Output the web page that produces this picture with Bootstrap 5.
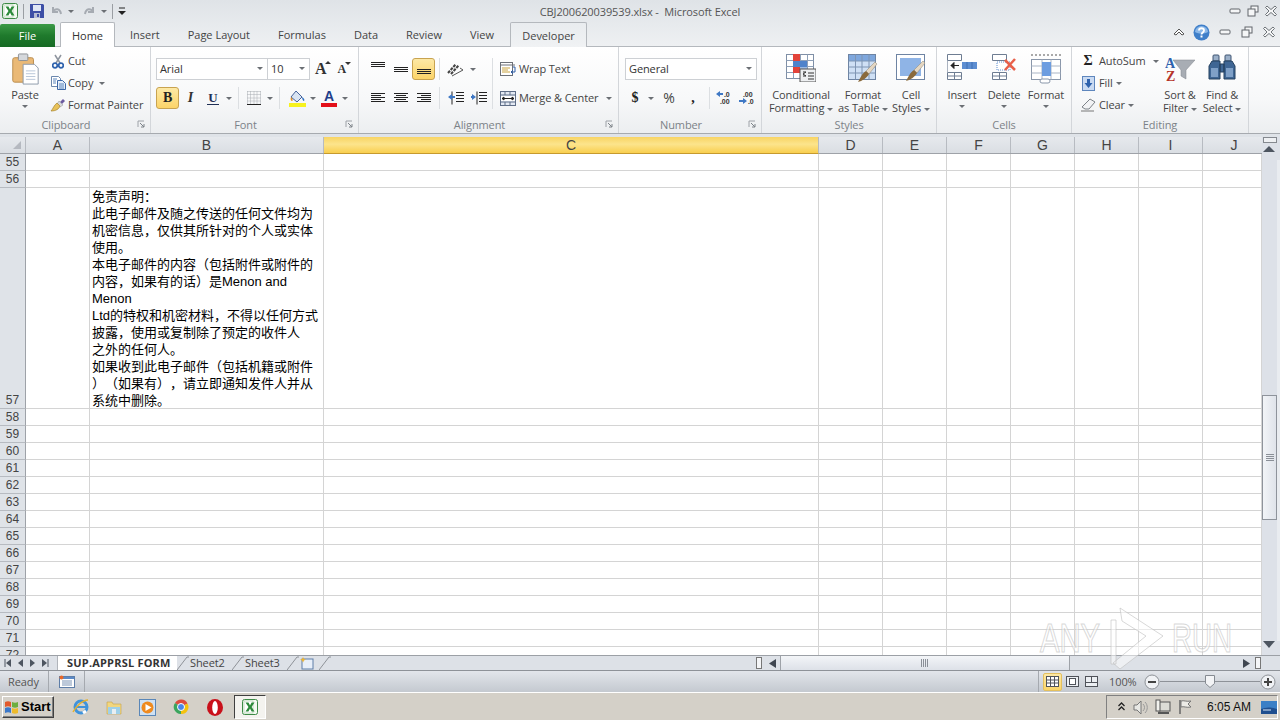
<!DOCTYPE html>
<html lang="en">
<head>
  <meta charset="UTF-8" />
  <title>CBJ200620039539.xlsx - Microsoft Excel</title>
  <link href="https://cdn.jsdelivr.net/npm/bootstrap@5.3.3/dist/css/bootstrap.min.css" rel="stylesheet"/>
  <style>
    body {
      width: 1280px;
      height: 720px;
      overflow: hidden;
      background: #d4d0c8;
      color: #444;
      font-family: "Open Sans", "Noto Sans", sans-serif;
      font-size: 11px;
      line-height: 13px;
      letter-spacing: -.1px;
    }

    svg { display: block; flex: none; }

    /* title + tabs */
    .xl-top { background: linear-gradient(#dfe3e7, #e8ebee 60%, #eef0f2); height: 47px; border-bottom: 1px solid #b4b8bd; }
    .xl-title { height: 22px; }
    .xl-side { flex: 1 1 0; }
    .xl-doc { color: #555; }
    .qat-sep { width: 1px; height: 15px; background: #9a9ea3; }
    .qat-left { padding-left: 2px; gap: 5px; }
    .win-btns { gap: 4px; padding-right: 2px; }
    .xl-tabs { height: 25px; letter-spacing: 0; }
    .tab-file { width: 55px; height: 23px; margin-top: 2px; background: linear-gradient(#3c9a47, #1f7a2c 50%, #166a24); color: #fff; border-radius: 2px 2px 0 0; margin-right: 5px; }
    .tab-home { width: 55px; height: 25px; background: #fff; border: 1px solid #b4b8bd; border-bottom: 0; border-radius: 2px 2px 0 0; color: #333; margin-right: 1px; position: relative; z-index: 2; }
    .tab-plain { padding: 0 14px; height: 25px; }
    .tab-dev { width: 77px; height: 25px; border: 1px solid #b4b8bd; border-bottom: 0; border-radius: 2px 2px 0 0; background: linear-gradient(#e9ecef, #f0f2f4); margin-left: 2px; }
    .tab-right { flex: 1; justify-content: flex-end; gap: 8px; padding-right: 4px; height: 20px; }

    /* ribbon */
    .xl-ribbon { height: 87px; background: linear-gradient(#fff, #f7f8f9 60%, #eceef0); border-bottom: 1px solid #a6aaaf; }
    .rb-grp { flex-direction: column; border-right: 1px solid #d3d6da; }
    .rb-clip { width: 151px; }
    .rb-font { width: 208px; }
    .rb-align { width: 260px; }
    .rb-num { width: 143px; }
    .rb-styles { width: 175px; }
    .rb-cells { width: 135px; }
    .rb-edit { width: 177px; }
    .rb-body { flex: 1; min-height: 0; }
    .rb-name { height: 17px; line-height: 17px; text-align: center; color: #7c8288; position: relative; }
    .rb-launch { padding-right: 18px; }
    .dlg-launch { position: absolute; right: 4px; top: 4px; }
    .pad-rows { padding-top: 11px; flex-direction: column; gap: 7px; }
    .pad-font { padding-left: 5px; }
    .pad-align { padding-left: 7px; }
    .pad-num { padding-left: 6px; }
    .pad-lg { padding: 7px 0 0 4px; }
    .pad-small { padding-top: 3px; }
    .rb-row { height: 22px; }
    .combo { height: 22px; border: 1px solid #cdd0d4; background: #fff; color: #333; padding: 0 0 2px 3px; justify-content: space-between; }
    .combo-font { width: 112px; }
    .combo-size { width: 43px; margin-left: -1px; }
    .combo-num { width: 132px; }
    .grow-set { margin-left: 5px; gap: 6px; }
    .tb { width: 23px; height: 22px; }
    .tb-22 { width: 22px; }
    .tb-20 { width: 20px; }
    .tb-24 { width: 24px; }
    .tb-26 { width: 26px; }
    .tb-on { background: linear-gradient(#fde9a6, #fcd468); border: 1px solid #c8a350; border-radius: 3px; }
    .cr-slot { width: 10px; height: 22px; }
    .cr-6 { width: 6px; }
    .cr-12 { width: 12px; }
    .cr { width: 0; height: 0; border-left: 3px solid transparent; border-right: 3px solid transparent; border-top: 3px solid #6b6f74; display: inline-block; vertical-align: middle; flex: none; }
    .vsep { width: 1px; height: 22px; background: #dcdfe2; margin: 0 4px; flex: none; }
    .vsep-wide { margin-left: 14px; }
    .vsep-near { margin-left: 2px; }
    .vsep-tall { height: 29px; margin-bottom: -7px; align-self: flex-start; }
    .txt-btn { padding-left: 3px; gap: 3px; color: #444; }
    .txt-btn span:not(.cr), .sm-row span:not(.cr) { padding-bottom: 2px; }
    .lg-btn { flex-direction: column; align-items: center; text-align: center; }
    .lg-icon { height: 34px; flex: none; }
    .lg-paste { height: 38px; padding-top: 3px; }
    .lg-caret { margin-top: 4px; line-height: 0; }
    .lg-42 { width: 42px; }
    .lg-50 { width: 50px; }
    .lg-54 { width: 54px; }
    .lg-70 { width: 70px; }
    .sm-col { flex-direction: column; }
    .sm-edit { width: 87px; padding-left: 8px; }
    .sm-edit .sm-row { gap: 3px; }
    .sm-row { height: 22px; gap: 2px; }
    .sm-ico { width: 16px; justify-content: center; }
    .sym-b { font: 700 14px/16px "Liberation Serif", serif; color: #222; }
    .sym-i { font: italic 700 14px/16px "Liberation Serif", serif; color: #333; }
    .sym-u { font: 700 13px/12px "Liberation Serif", serif; color: #1f2f55; border-bottom: 1px solid #1f2f55; padding: 0 1px; }
    .sym-big { font: 700 16px/16px "Liberation Serif", serif; color: #333; }
    .sym-small { font: 700 12px/14px "Liberation Serif", serif; color: #333; }
    .grow-ico { align-items: flex-start; }
    .grow-ico svg { margin-left: -1px; }
    .sym-color { font: 700 14px/13px "Liberation Sans", sans-serif; color: #1f3f8a; border-bottom: 4px solid #e3101a; width: 16px; text-align: center; }
    .sym-money { font: 700 14px/16px "Liberation Serif", serif; color: #222; }
    .sym-pct { font: 14px/16px "Open Sans", sans-serif; color: #444; }
    .sym-sum { font: 700 14px/16px "Liberation Serif", serif; color: #222; }

    /* sheet */
    .sheet-gap { height: 3px; background: #dfe3e8; }
    .sheet-wrap { height: 518px; }
    .sheet-main { width: 1262px; overflow: hidden; background: #fff; }
    .hdr-row { height: 17px; background: linear-gradient(#e6e9ed, #dadee3); border-bottom: 1px solid #9ea2a8; font: 14px/16px "Liberation Sans", sans-serif; color: #444; letter-spacing: 0; }
    .hdr-c { border-right: 1px solid #b7bbc1; text-align: center; flex: none; }
    .hdr-sel { background: linear-gradient(#f8d463, #fce48c 45%, #f9cf4f); border-bottom: 1px solid #c69a2e; margin-bottom: -1px; }
    .w-rh { width: 26px; }
    .w-a { width: 64px; }
    .w-b { width: 234px; }
    .w-c { width: 495px; }
    .w-n { width: 64px; }
    .w-j { width: 59px; border-right: 0; padding-left: 3px; }
    .grid-row { height: 17px; }
    .grid-tall { height: 221px; }
    .gc { flex: none; border-right: 1px solid #d4d4d4; border-bottom: 1px solid #d4d4d4; }
    .rh { background: #dfe3e8; border-right: 1px solid #9ea2a8; border-bottom: 1px solid #b7bbc1; font: 12px/16px "Liberation Sans", sans-serif; color: #444; text-align: center; display: flex; align-items: flex-end; justify-content: center; letter-spacing: 0; }
    .cell-text { font: 13px/17px "Liberation Sans", "Noto Sans CJK SC", sans-serif; color: #000; padding-left: 2px; white-space: nowrap; letter-spacing: 0; text-spacing-trim: space-all; }

    .vbar { width: 18px; background: #dde1e8; }
    .v-split { width: 14px; height: 6px; border: 1px solid #85898f; background: #eef0f3; margin: 0 0 3px 1px; }
    .v-arrow { height: 14px; width: 14px; }
    .v-track { flex: 1; border-right: 3px solid #e9ecf0; }
    .v-thumb { width: 15px; height: 125px; margin-top: 235px; background: linear-gradient(90deg, #f2f4f7, #dfe3ea); border: 1px solid #8e939b; }
    .v-down { height: 14px; width: 14px; }

    .sheet-bar { height: 16px; background: #dde1e7; border-top: 1px solid #9ca0a6; border-bottom: 1px solid #8e9298; color: #444; position: relative; }
    .sh-nav { width: 58px; padding-left: 4px; gap: 5px; border-right: 1px solid #b0b4ba; height: 100%; }
    .sh-on { width: 119px; height: 100%; background: #fff; color: #333; font-weight: 700; padding-left: 9px; line-height: 14px; letter-spacing: .2px; }
    .sh-tab { height: 100%; line-height: 14px; }
    .sh-wide { width: 43px; padding-left: 1px; }
    .sh-fill { flex: 1; }
    .sh-vs { width: 6px; height: 12px; border: 1px solid #777; background: #f4f5f7; margin-right: 3px; }
    .sh-vs-end { margin: 0 19px 0 1px; }
    .sh-arrow { width: 15px; justify-content: center; }
    .sh-thumb { width: 290px; height: 100%; background: linear-gradient(#f3f5f8, #dde1e8); border: 1px solid #9ea2a8; border-width: 0 1px; }
    .sh-track { width: 169px; }

    .status { height: 22px; background: linear-gradient(#e3e6eb, #d3d7dd 50%, #c4c9d0); color: #555; border-bottom: 1px solid #fff; }
    .st-sep { width: 1px; height: 21px; background: #a5a9af; }
    .st-ready { width: 48px; padding-left: 8px; }
    .st-macro { width: 35px; justify-content: center; }
    .st-fill { flex: 1; }
    .st-views { padding-left: 4px; gap: 1px; }
    .st-view { width: 18px; height: 18px; justify-content: center; }
    .st-active { background: linear-gradient(#fde9a6, #fbd569); border: 1px solid #e4c05e; border-radius: 2px; width: 19px; }
    .st-zoom { margin-left: 9px; width: 35px; }
    .st-slider { width: 100px; height: 1px; background: #8e9298; position: relative; }
    .st-thumb { position: absolute; left: 45px; top: -6px; }
    .st-end { padding-right: 4px; }

    .taskbar { height: 27px; background: #d4d0c8; padding: 2px 2px 1px; color: #000; letter-spacing: 0; }
    .start-btn { width: 52px; height: 22px; margin-top: 1px; border: 1px solid; border-color: #fff #404040 #404040 #fff; box-shadow: inset -1px -1px 0 #808080; font: 700 13px/20px "Liberation Sans", sans-serif; gap: 1px; padding-left: 1px; }
    .task-icons { margin-left: 10px; gap: 0; }
    .task-ic { width: 33.5px; height: 24px; justify-content: center; }
    .task-on { width: 32px; height: 24px; margin-left: 2px; justify-content: center; background: #f4f3ef; border: 1px solid; border-color: #404040 #fff #fff #404040; }
    .tray { width: 172px; height: 24px; border: 1px solid; border-color: #808080 #fff #fff #808080; padding-left: 6px; gap: 0; font: 12px/20px "Liberation Sans", sans-serif; color: #111; }
    .tray-ic { width: 24px; justify-content: center; }
    .tray-up { width: 18px; }
    .tray-time { width: 60px; text-align: center; margin-left: 4px; white-space: nowrap; }

    .wm { position: absolute; left: 1038px; top: 606px; pointer-events: none; }
    .wm text { font: 40px "Liberation Sans", sans-serif; fill: rgba(255,255,255,.5); stroke: rgba(190,190,190,.6); stroke-width: 1.200; }
  </style>
</head>
<body>
  <svg width="0" height="0" class="position-absolute">
    <symbol id="xl-logo" viewBox="0 0 16 16">
      <rect x=".5" y=".5" width="15" height="15" rx="2" fill="#f4faf2" stroke="#3d8a46"/>
      <rect x="2" y="2" width="9" height="12" fill="#fff" stroke="#9dc59f" stroke-width=".6"/>
      <path d="M3.5 3.5h3l1.5 3 1.6-3h2.9L9.6 8l2.9 4.5H9.6L8 9.4l-1.600 3.100h-2.900L6.500 8z" fill="#2c8a3a"/>
    </symbol>
    <symbol id="win-min" viewBox="0 0 12 12"><rect x="1" y="4" width="10" height="4" rx="1" fill="#f5f6f7" stroke="#60656b"/></symbol>
    <symbol id="win-rest" viewBox="0 0 12 12"><rect x="4" y="1" width="7" height="6" fill="#f5f6f7" stroke="#60656b"/><rect x="1" y="4" width="7" height="7" fill="#f5f6f7" stroke="#60656b"/></symbol>
    <symbol id="win-close" viewBox="0 0 12 12"><path d="M2 1l4 3.500L10 1l1.500 1.500L8 6l3.500 3.500L10 11 6 7.500 2 11 .5 9.500 4 6 .5 2.500z" fill="#f5f6f7" stroke="#60656b" stroke-width=".9"/></symbol>
    <symbol id="launch" viewBox="0 0 9 9"><path d="M1 7V1h6" fill="none" stroke="#9ea2a8"/><path d="M3 3l4 4M4 7h3V4" fill="none" stroke="#7c8288"/></symbol>
  </svg>

  <!-- title bar and ribbon tabs -->
  <div class="xl-top">
    <div class="xl-title d-flex align-items-center">
      <div class="xl-side d-flex align-items-center qat-left">
        <svg width="16" height="16"><use href="#xl-logo"/></svg>
        <div class="qat-sep"></div>
        <svg width="16" height="16" viewBox="0 0 16 16"><path d="M1 1h13l1 1v13H1z" fill="#3d4fa6"/><rect x="4" y="2" width="8" height="6" fill="#dfe6f5"/><rect x="5" y="10" width="6" height="5" fill="#b6bdd4"/><rect x="8" y="11" width="2" height="3" fill="#3d4fa6"/></svg>
        <svg width="13" height="13" viewBox="0 0 13 13"><path d="M3 2v5h5M3 7c2-4 7-4 8 2" fill="none" stroke="#a6abb2" stroke-width="2"/></svg>
        <span class="cr"></span>
        <svg class="ms-1" width="13" height="13" viewBox="0 0 13 13"><path d="M10 2v5H5M10 7C8 3 3 3 2 9" fill="none" stroke="#a6abb2" stroke-width="2"/></svg>
        <span class="cr"></span>
        <div class="qat-sep"></div>
        <svg width="8" height="8" viewBox="0 0 8 8"><path d="M1 1h6" stroke="#222" stroke-width="1"/><path d="M0 4h8L4 8z" fill="#222"/></svg>
      </div>
      <div class="xl-doc">CBJ200620039539.xlsx -&nbsp; Microsoft Excel</div>
      <div class="xl-side d-flex justify-content-end win-btns">
        <svg width="14" height="12"><use href="#win-min"/></svg>
        <svg width="14" height="12"><use href="#win-rest"/></svg>
        <svg width="14" height="12"><use href="#win-close"/></svg>
      </div>
    </div>
    <div class="xl-tabs d-flex">
      <div class="tab-file d-flex align-items-center justify-content-center">File</div>
      <div class="tab-home d-flex align-items-center justify-content-center">Home</div>
      <div class="tab-plain d-flex align-items-center">Insert</div>
      <div class="tab-plain d-flex align-items-center">Page Layout</div>
      <div class="tab-plain d-flex align-items-center">Formulas</div>
      <div class="tab-plain d-flex align-items-center">Data</div>
      <div class="tab-plain d-flex align-items-center">Review</div>
      <div class="tab-plain d-flex align-items-center">View</div>
      <div class="tab-dev d-flex align-items-center justify-content-center">Developer</div>
      <div class="tab-right d-flex align-items-center">
        <svg width="12" height="10" viewBox="0 0 12 10"><path d="M1 7l5-5 5 5-2 1-3-3-3 3z" fill="#fff" stroke="#555"/></svg>
        <svg width="17" height="17" viewBox="0 0 17 17"><circle cx="8.500" cy="8.500" r="8" fill="#3f7fc9"/><path d="M2 8a6.500 6 0 0 1 13 0c-4 2-9 2-13 0z" fill="#8ab7e8"/><path d="M6 6.500c0-3 5-3 5 0 0 2-2.500 2-2.500 4" fill="none" stroke="#fff" stroke-width="1.800"/><rect x="7.500" y="11.500" width="2" height="2" fill="#fff"/></svg>
        <svg width="14" height="12"><use href="#win-min"/></svg>
        <svg width="14" height="12"><use href="#win-rest"/></svg>
        <svg width="14" height="12"><use href="#win-close"/></svg>
      </div>
    </div>
  </div>

  <!-- ribbon -->
  <div class="xl-ribbon d-flex">
    <div class="rb-grp rb-clip d-flex">
      <div class="rb-body d-flex pad-small">
        <div class="lg-btn lg-50 d-flex">
          <div class="lg-icon lg-paste">
            <svg width="30" height="32" viewBox="0 0 30 34"><rect x="2" y="5" width="22" height="26" rx="2" fill="#eab976" stroke="#b98b4b"/><rect x="8" y="1" width="10" height="7" rx="1" fill="#d5d8dc" stroke="#8b8f94"/><path d="M13 12h12l4 4v17H13z" fill="#fff" stroke="#8b97a8"/><path d="M16 19h10M16 22h10M16 25h10M16 28h10" stroke="#b5c4d8"/></svg>
          </div>
          <div>Paste</div>
          <div class="lg-caret"><span class="cr"></span></div>
        </div>
        <div class="sm-col d-flex">
          <div class="sm-row d-flex align-items-center">
            <div class="sm-ico d-flex"><svg width="12" height="15" viewBox="0 0 12 15"><path d="M3 1l5 8M9 1L4 9" stroke="#8e959e" stroke-width="1.500"/><circle cx="3" cy="11.500" r="2.300" fill="none" stroke="#2e62ad" stroke-width="1.700"/><circle cx="9" cy="11.500" r="2.300" fill="none" stroke="#2e62ad" stroke-width="1.700"/></svg></div>
            <span>Cut</span>
          </div>
          <div class="sm-row d-flex align-items-center">
            <div class="sm-ico d-flex"><svg width="15" height="14" viewBox="0 0 15 14"><path d="M.5.5h7l2 2v8h-9z" fill="#fff" stroke="#6b87ad"/><path d="M6.500 4.500h5l3 3v6h-8z" fill="#e6eef9" stroke="#3c67a6"/><path d="M8 8h5M8 10h5M8 12h5M2 3h4M2 5h3M2 7h3" stroke="#5b85bd"/></svg></div>
            <span>Copy</span><span class="cr ms-1"></span>
          </div>
          <div class="sm-row d-flex align-items-center">
            <div class="sm-ico d-flex"><svg width="16" height="14" viewBox="0 0 16 14"><path d="M10 4l3-3 2 2-3 3z" fill="#6c5ba0"/><path d="M9 3l4 4-3 2-3-3z" fill="#d8d9dd" stroke="#8b8f94" stroke-width=".5"/><path d="M7 5l3 3c-1 3-4 5-9 5 2-2 3-6 6-8z" fill="#e8c25a" stroke="#a68530" stroke-width=".7"/></svg></div>
            <span>Format Painter</span>
          </div>
        </div>
      </div>
      <div class="rb-name rb-launch">Clipboard<svg class="dlg-launch" width="9" height="9"><use href="#launch"/></svg></div>
    </div>

    <div class="rb-grp rb-font d-flex">
      <div class="rb-body d-flex pad-rows pad-font">
        <div class="rb-row d-flex align-items-center">
          <div class="combo combo-font d-flex align-items-center">Arial<span class="cr me-1"></span></div>
          <div class="combo combo-size d-flex align-items-center">10<span class="cr me-1"></span></div>
          <div class="grow-set d-flex align-items-center">
            <div class="grow-ico d-flex"><span class="sym-big">A</span><svg width="6" height="4" viewBox="0 0 6 4"><path d="M0 3l3-3 3 3z" fill="#333"/></svg></div>
            <div class="grow-ico d-flex"><span class="sym-small">A</span><svg width="6" height="4" viewBox="0 0 6 4"><path d="M0 0h6L3 3z" fill="#333"/></svg></div>
          </div>
        </div>
        <div class="rb-row d-flex align-items-center">
          <div class="tb tb-on d-flex align-items-center justify-content-center"><span class="sym-b">B</span></div>
          <div class="tb d-flex align-items-center justify-content-center"><span class="sym-i">I</span></div>
          <div class="tb tb-22 d-flex align-items-center justify-content-center"><span class="sym-u">U</span></div>
          <div class="cr-slot d-flex align-items-center justify-content-center"><span class="cr"></span></div>
          <div class="vsep"></div>
          <div class="tb tb-22 d-flex align-items-center justify-content-center"><svg width="14" height="14" viewBox="0 0 14 14"><path d="M.5.5h13M.5 3.500h13M.5 7h13M.5 10h13M.5.5v13M3.500.5v13M7 .5v13M10 .5v13M13.500.5v13" stroke="#a9adb3" stroke-dasharray="1 1" fill="none"/><path d="M0 13.500h14" stroke="#222"/></svg></div>
          <div class="cr-slot d-flex align-items-center justify-content-center"><span class="cr"></span></div>
          <div class="vsep"></div>
          <div class="tb tb-26 d-flex align-items-center justify-content-center"><svg width="17" height="17" viewBox="0 0 17 17"><rect y="13" width="17" height="4" fill="#f7f21e"/><path d="M7 1l6 6-5 5-6-5z" fill="#d9e4f2" stroke="#47639a"/><path d="M13 7c2 1 3 3 2 4-1 0-2-2-2-4z" fill="#2d6fc0"/><path d="M2 7c-1 2 0 4 1 4s1-2-1-4z" fill="#e48f24"/></svg></div>
          <div class="cr-slot cr-6 d-flex align-items-center justify-content-center"><span class="cr"></span></div>
          <div class="tb tb-26 d-flex align-items-center justify-content-center"><span class="sym-color">A</span></div>
          <div class="cr-slot cr-6 d-flex align-items-center justify-content-center"><span class="cr"></span></div>
        </div>
      </div>
      <div class="rb-name rb-launch">Font<svg class="dlg-launch" width="9" height="9"><use href="#launch"/></svg></div>
    </div>

    <div class="rb-grp rb-align d-flex">
      <div class="rb-body d-flex pad-rows pad-align">
        <div class="rb-row d-flex align-items-center">
          <div class="tb d-flex align-items-start justify-content-center pt-1"><svg width="14" height="7" viewBox="0 0 14 7"><path d="M0 .5h14M0 2.500h14M0 4.500h14" stroke="#222"/></svg></div>
          <div class="tb d-flex align-items-center justify-content-center"><svg width="14" height="7" viewBox="0 0 14 7"><path d="M0 1.500h14M0 3.500h14M0 5.500h14" stroke="#222"/></svg></div>
          <div class="tb tb-on d-flex align-items-end justify-content-center pb-1"><svg width="14" height="7" viewBox="0 0 14 7"><path d="M0 1.500h14M0 3.500h14M0 5.500h14" stroke="#222"/></svg></div>
          <div class="vsep"></div>
          <div class="tb tb-24 d-flex align-items-center justify-content-center"><svg width="20" height="18" viewBox="0 0 20 18"><path d="M2 13l8-9M5 14l8-9" stroke="#444" stroke-width="2" stroke-dasharray="3 1"/><path d="M6 16l11-6-3-2" fill="none" stroke="#555"/></svg></div>
          <div class="cr-slot d-flex align-items-center justify-content-center"><span class="cr"></span></div>
          <div class="vsep vsep-wide vsep-tall"></div>
          <div class="txt-btn d-flex align-items-center">
            <svg width="16" height="15" viewBox="0 0 16 15"><rect x=".5" y=".5" width="12" height="13" fill="#fff" stroke="#6d7178"/><path d="M0 3h15" stroke="#6d7178"/><path d="M2 6h8M2 8h6M2 10h8" stroke="#c9a440" stroke-width="1.200"/><path d="M13 5h2v5h-3M13 8l-2 2 2 2" fill="none" stroke="#2f5fa8"/></svg>
            <span>Wrap Text</span>
          </div>
        </div>
        <div class="rb-row d-flex align-items-center">
          <div class="tb d-flex align-items-center justify-content-center"><svg width="14" height="12" viewBox="0 0 14 12"><path d="M0 1.500h14M0 3.500h10M0 5.500h14M0 7.500h10M0 9.500h14" stroke="#222"/></svg></div>
          <div class="tb d-flex align-items-center justify-content-center"><svg width="14" height="12" viewBox="0 0 14 12"><path d="M0 1.500h14M2 3.500h10M0 5.500h14M2 7.500h10M0 9.500h14" stroke="#222"/></svg></div>
          <div class="tb d-flex align-items-center justify-content-center"><svg width="14" height="12" viewBox="0 0 14 12"><path d="M0 1.500h14M4 3.500h10M0 5.500h14M4 7.500h10M0 9.500h14" stroke="#222"/></svg></div>
          <div class="vsep"></div>
          <div class="tb d-flex align-items-center justify-content-center"><svg width="16" height="14" viewBox="0 0 16 14"><path d="M8 1.500h8M8 4.500h8M8 7.500h8M8 10.500h8M4 .5v13" stroke="#222"/><path d="M0 6l4-3v2h3v2H4v2z" fill="#3f78c4"/></svg></div>
          <div class="tb d-flex align-items-center justify-content-center"><svg width="16" height="14" viewBox="0 0 16 14"><path d="M8 1.500h8M8 4.500h8M8 7.500h8M8 10.500h8M6 .5v13" stroke="#222"/><path d="M5 6L1 3v2h-1v2h1v2z" fill="#3f78c4"/></svg></div>
          <div class="vsep vsep-near"></div>
          <div class="txt-btn d-flex align-items-center">
            <svg width="16" height="15" viewBox="0 0 16 15"><rect x=".5" y=".5" width="15" height="14" fill="#e3e9f3" stroke="#5f6e87"/><path d="M.5 4h15M.5 11h15M5 .5v3.500M10 .5v3.500M5 11v3.500M10 11v3.500" stroke="#5f6e87"/><rect x="1" y="5" width="14" height="5" fill="#fff"/><path d="M2 7.500h12M2 7.500l2-1.500v3zM14 7.500l-2-1.500v3z" stroke="#222" fill="#222"/></svg>
            <span>Merge &amp; Center</span><span class="cr ms-1"></span>
          </div>
        </div>
      </div>
      <div class="rb-name rb-launch">Alignment<svg class="dlg-launch" width="9" height="9"><use href="#launch"/></svg></div>
    </div>

    <div class="rb-grp rb-num d-flex">
      <div class="rb-body d-flex pad-rows pad-num">
        <div class="rb-row d-flex align-items-center">
          <div class="combo combo-num d-flex align-items-center">General<span class="cr me-1"></span></div>
        </div>
        <div class="rb-row d-flex align-items-center">
          <div class="tb tb-20 d-flex align-items-center justify-content-center sym-money">$</div>
          <div class="cr-slot cr-12 d-flex align-items-center justify-content-center"><span class="cr"></span></div>
          <div class="tb tb-24 d-flex align-items-center justify-content-center sym-pct">%</div>
          <div class="tb tb-24 d-flex align-items-center justify-content-center sym-money">,</div>
          <div class="vsep"></div>
          <div class="tb tb-22 d-flex align-items-center justify-content-center"><svg width="18" height="16" viewBox="0 0 18 16"><text x="8" y="7" font-family="Liberation Sans" font-weight="700" font-size="7" fill="#333">.0</text><text x="4" y="14" font-family="Liberation Sans" font-weight="700" font-size="7" fill="#333">.00</text><path d="M0 4l4-3v2h3v2H4v2z" fill="#3f78c4"/></svg></div>
          <div class="tb tb-22 d-flex align-items-center justify-content-center"><svg width="18" height="16" viewBox="0 0 18 16"><text x="5" y="7" font-family="Liberation Sans" font-weight="700" font-size="7" fill="#333">.00</text><text x="10" y="14" font-family="Liberation Sans" font-weight="700" font-size="7" fill="#333">.0</text><path d="M9 11l-4-3v2H1v2h4v2z" fill="#3f78c4"/></svg></div>
        </div>
      </div>
      <div class="rb-name rb-launch">Number<svg class="dlg-launch" width="9" height="9"><use href="#launch"/></svg></div>
    </div>

    <div class="rb-grp rb-styles d-flex">
      <div class="rb-body d-flex pad-lg">
        <div class="lg-btn lg-70 d-flex">
          <div class="lg-icon">
            <svg width="30" height="28" viewBox="0 0 30 28"><rect x=".5" y=".5" width="27" height="24" fill="#fff" stroke="#7f8fa6"/><path d="M.5 6.500h27M.5 12.500h27M.5 18.500h27M7.500 .5v24M14.500 .5v24M21.500 .5v24" stroke="#8ea0b8"/><rect x="7" y="0" width="7" height="7" fill="#e3433a"/><rect x="7" y="7" width="14" height="6" fill="#4f83cb"/><rect x="7" y="13" width="7" height="6" fill="#e3433a"/><rect x="14" y="13" width="7" height="6" fill="#9cbbe3"/><rect x="14" y="15" width="16" height="13" fill="#eef0f2" stroke="#555"/><path d="M17 18h3l-3 2 3 2h-3M22 19h6M22 22h6M22 25h6" fill="none" stroke="#333"/></svg>
          </div>
          <div>Conditional</div>
          <div>Formatting <span class="cr"></span></div>
        </div>
        <div class="lg-btn lg-54 d-flex">
          <div class="lg-icon">
            <svg width="30" height="29" viewBox="0 0 30 29"><rect x=".5" y=".5" width="27" height="25" fill="#cfe0f5" stroke="#6e84a3"/><rect x="1" y="1" width="26" height="6" fill="#7ea7dd"/><path d="M.5 7h27M.5 13h27M.5 19h27M7.500 .5v25M14 .5v25M21 .5v25" stroke="#7f95b3"/><path d="M29 10l-2-2-9 9 3 3z" fill="#e5d7c2" stroke="#8d8472" stroke-width=".5"/><path d="M18 17l3 3c-2 4-7 7-11 8 2-3 4-9 8-11z" fill="#8a6a3c"/></svg>
          </div>
          <div>Format</div>
          <div>as Table <span class="cr"></span></div>
        </div>
        <div class="lg-btn lg-42 d-flex">
          <div class="lg-icon">
            <svg width="30" height="29" viewBox="0 0 30 29"><rect x=".5" y=".5" width="28" height="25" fill="#fff" stroke="#6e84a3"/><rect x="4" y="4" width="21" height="18" fill="#8fb4e6"/><path d="M29 9l-2-2-9 9 3 3z" fill="#e5d7c2" stroke="#8d8472" stroke-width=".5"/><path d="M18 16l3 3c-2 4-7 7-11 8 2-3 4-9 8-11z" fill="#8a6a3c"/></svg>
          </div>
          <div>Cell</div>
          <div>Styles <span class="cr"></span></div>
        </div>
      </div>
      <div class="rb-name">Styles</div>
    </div>

    <div class="rb-grp rb-cells d-flex">
      <div class="rb-body d-flex pad-lg">
        <div class="lg-btn lg-42 d-flex">
          <div class="lg-icon">
            <svg width="30" height="27" viewBox="0 0 30 27"><path d="M.5.5h14v6H.5zM.5 18.500h14v7H.5zM7.500 18.500v7M.5 22h14" fill="#fff" stroke="#6e7d92"/><rect x="15" y="8" width="15" height="7" fill="#5d8ed1"/><path d="M20 8v7M25 8v7" stroke="#3f6fb3"/><path d="M4 11.500h8M4 11.500l3-3v6z" stroke="#222" fill="#222"/><path d="M.5 7v11" stroke="#aab3c0"/></svg>
          </div>
          <div>Insert</div>
          <div class="lg-caret"><span class="cr"></span></div>
        </div>
        <div class="lg-btn lg-42 d-flex">
          <div class="lg-icon">
            <svg width="25" height="27" viewBox="0 0 25 27"><path d="M.5.5h14v6H.5zM.5 18.500h14v7H.5zM7.500 18.500v7M.5 22h14" fill="#fff" stroke="#6e7d92"/><path d="M5 8h13v8H5z" fill="#fff" stroke="#5d8ed1" stroke-dasharray="1 1"/><path d="M13 6l10 10M23 5L13 16" stroke="#e8604a" stroke-width="2.500"/></svg>
          </div>
          <div>Delete</div>
          <div class="lg-caret"><span class="cr"></span></div>
        </div>
        <div class="lg-btn lg-42 d-flex">
          <div class="lg-icon">
            <svg width="32" height="30" viewBox="0 0 32 30"><path d="M1 1h30" stroke="#555" stroke-dasharray="2 2"/><rect x="1.500" y="5.500" width="29" height="20" fill="#fff" stroke="#8a97aa"/><path d="M12 5.500v20M21 5.500v20M1.500 12h29M1.500 19h29" stroke="#aab5c5"/><rect x="12" y="8" width="9" height="14" fill="#6d9de0"/><rect x="10" y="25" width="10" height="4" rx="2" fill="#fff" stroke="#8a97aa"/></svg>
          </div>
          <div>Format</div>
          <div class="lg-caret"><span class="cr"></span></div>
        </div>
      </div>
      <div class="rb-name">Cells</div>
    </div>

    <div class="rb-grp rb-edit d-flex">
      <div class="rb-body d-flex pad-small">
        <div class="sm-col sm-edit d-flex">
          <div class="sm-row d-flex align-items-center">
            <div class="sm-ico d-flex sym-sum">Σ</div>
            <span>AutoSum</span><span class="cr ms-1"></span>
          </div>
          <div class="sm-row d-flex align-items-center">
            <div class="sm-ico d-flex"><svg width="13" height="15" viewBox="0 0 13 15"><rect x=".5" y=".5" width="12" height="14" fill="#c9daf2" stroke="#5e86bd"/><path d="M5 3h3v4h2.500L6.500 12 2.500 7H5z" fill="#2e62ad"/></svg></div>
            <span>Fill</span><span class="cr"></span>
          </div>
          <div class="sm-row d-flex align-items-center">
            <div class="sm-ico d-flex"><svg width="15" height="14" viewBox="0 0 15 14"><path d="M9 1l5 3-6 7H4L1 9z" fill="#f2f3f5" stroke="#7c8288"/><path d="M0 13h13" stroke="#777"/></svg></div>
            <span>Clear</span><span class="cr"></span>
          </div>
        </div>
        <div class="lg-btn lg-42 d-flex mt-1">
          <div class="lg-icon">
            <svg width="30" height="31" viewBox="0 0 30 31"><path d="M8 6h22l-9 10v9l-5-3v-6z" fill="#a8adb4" stroke="#80858c" stroke-width=".5"/><text x="0" y="14" font-family="Liberation Serif" font-weight="700" font-size="14" fill="#2f62ad">A</text><text x="1" y="27" font-family="Liberation Serif" font-weight="700" font-size="14" fill="#b5342a">Z</text></svg>
          </div>
          <div>Sort &amp;</div>
          <div>Filter <span class="cr"></span></div>
        </div>
        <div class="lg-btn lg-42 d-flex mt-1">
          <div class="lg-icon">
            <svg width="28" height="27" viewBox="0 0 28 27"><rect x="5" y="1" width="6" height="6" rx="1" fill="#9bb0c9" stroke="#3f5573"/><rect x="17" y="1" width="6" height="6" rx="1" fill="#9bb0c9" stroke="#3f5573"/><path d="M1 25V12l3-5h8v18zM16 25V7h8l3 5v13zM12 10h4v8h-4z" fill="#3f6694" stroke="#24405f"/><path d="M3 14h7v9H3zM18 14h7v9h-7z" fill="#7fa0c7"/></svg>
          </div>
          <div>Find &amp;</div>
          <div>Select <span class="cr"></span></div>
        </div>
      </div>
      <div class="rb-name">Editing</div>
    </div>
  </div>

  <!-- worksheet -->
  <div class="sheet-gap"></div>
  <div class="sheet-wrap d-flex">
    <div class="sheet-main">
      <div class="hdr-row d-flex">
        <div class="hdr-c w-rh d-flex align-items-end justify-content-end p-1"><svg width="8" height="8" viewBox="0 0 8 8"><path d="M8 0v8H0z" fill="#b5b9c0"/></svg></div>
        <div class="hdr-c w-a">A</div>
        <div class="hdr-c w-b">B</div>
        <div class="hdr-c w-c hdr-sel">C</div>
        <div class="hdr-c w-n">D</div>
        <div class="hdr-c w-n">E</div>
        <div class="hdr-c w-n">F</div>
        <div class="hdr-c w-n">G</div>
        <div class="hdr-c w-n">H</div>
        <div class="hdr-c w-n">I</div>
        <div class="hdr-c w-j">J</div>
      </div>
      <div id="grid"></div>
    </div>
    <div class="vbar d-flex flex-column">
      <div class="v-split"></div>
      <div class="v-arrow d-flex justify-content-center"><svg width="12" height="7" viewBox="0 0 12 7"><path d="M6 0l6 6H0z" fill="#4d5560"/></svg></div>
      <div class="v-track">
        <div class="v-thumb d-flex align-items-center justify-content-center"><svg width="8" height="8" viewBox="0 0 8 8"><path d="M0 .5h8M0 2.500h8M0 4.500h8M0 6.500h8" stroke="#8a8f97"/></svg></div>
      </div>
      <div class="v-down d-flex justify-content-center"><svg width="12" height="7" viewBox="0 0 12 7"><path d="M6 7L0 0h12z" fill="#4d5560"/></svg></div>
    </div>
  </div>

  <!-- sheet tabs + horizontal scrollbar -->
  <div class="sheet-bar d-flex align-items-center">
    <div class="sh-nav d-flex align-items-center">
      <svg width="8" height="8" viewBox="0 0 8 8"><path d="M1 0v8" stroke="#4d5560"/><path d="M7 0v8L2 4z" fill="#4d5560"/></svg>
      <svg width="7" height="8" viewBox="0 0 7 8"><path d="M6 0v8L1 4z" fill="#4d5560"/></svg>
      <svg width="7" height="8" viewBox="0 0 7 8"><path d="M1 0v8l5-4z" fill="#4d5560"/></svg>
      <svg width="8" height="8" viewBox="0 0 8 8"><path d="M7 0v8" stroke="#4d5560"/><path d="M1 0v8l5-4z" fill="#4d5560"/></svg>
    </div>
    <div class="sh-on">SUP.APPRSL FORM</div>
    <svg width="12" height="14" viewBox="0 0 12 14"><path d="M0 14L10 1h2" fill="none" stroke="#8e9298"/></svg>
    <div class="sh-tab sh-wide">Sheet2</div>
    <svg width="12" height="14" viewBox="0 0 12 14"><path d="M0 14L10 1h2" fill="none" stroke="#8e9298"/></svg>
    <div class="sh-tab sh-wide">Sheet3</div>
    <svg width="12" height="14" viewBox="0 0 12 14"><path d="M0 14L10 1h2" fill="none" stroke="#8e9298"/></svg>
    <svg width="16" height="14" viewBox="0 0 16 14"><rect x="3" y="3" width="11" height="10" fill="#e8eff9" stroke="#5e7ea8"/><path d="M4 1l1 2 2 .5-2 1-1 2-1-2-2-1 2-.5z" fill="#e8b339"/></svg>
    <svg class="ms-1" width="12" height="14" viewBox="0 0 12 14"><path d="M0 14L10 1h2" fill="none" stroke="#8e9298"/></svg>
    <div class="sh-fill"></div>
    <div class="sh-vs"></div>
    <div class="sh-arrow d-flex"><svg width="7" height="9" viewBox="0 0 7 9"><path d="M7 0v9L0 4.500z" fill="#3f4650"/></svg></div>
    <div class="sh-thumb d-flex align-items-center justify-content-center"><svg width="8" height="8" viewBox="0 0 8 8"><path d="M.5 0v8M2.500 0v8M4.500 0v8M6.500 0v8" stroke="#8a8f97"/></svg></div>
    <div class="sh-track"></div>
    <div class="sh-arrow d-flex"><svg width="7" height="9" viewBox="0 0 7 9"><path d="M0 0v9l7-4.500z" fill="#3f4650"/></svg></div>
    <div class="sh-vs sh-vs-end"></div>
  </div>

  <!-- status bar -->
  <div class="status d-flex align-items-center">
    <div class="st-ready">Ready</div>
    <div class="st-sep"></div>
    <div class="st-macro d-flex"><svg width="16" height="13" viewBox="0 0 16 13"><rect x=".5" y="1.500" width="15" height="11" fill="#fff" stroke="#5e7ea8"/><rect x="1" y="2" width="14" height="2" fill="#5b8ac8"/><path d="M3 6h10M3 8h10M3 10h10" stroke="#7a93b5"/><circle cx="2.500" cy="2.500" r="2" fill="#e5682b"/></svg></div>
    <div class="st-sep"></div>
    <div class="st-fill"></div>
    <div class="st-sep"></div>
    <div class="st-views d-flex align-items-center">
      <div class="st-view st-active d-flex align-items-center"><svg width="13" height="11" viewBox="0 0 13 11"><rect x=".5" y=".5" width="12" height="10" fill="#fff" stroke="#50535a"/><path d="M.5 4h12M.5 7h12M4.500 .5v10M8.500 .5v10" stroke="#50535a"/></svg></div>
      <div class="st-view d-flex align-items-center"><svg width="13" height="11" viewBox="0 0 13 11"><rect x=".5" y=".5" width="12" height="10" fill="#eceff3" stroke="#50535a"/><rect x="3.500" y="2.500" width="6" height="6" fill="#fff" stroke="#50535a"/></svg></div>
      <div class="st-view d-flex align-items-center"><svg width="13" height="11" viewBox="0 0 13 11"><rect x=".5" y=".5" width="12" height="10" fill="#eceff3" stroke="#50535a"/><path d="M6.500 .5v6M.5 6.500h12" stroke="#50535a"/></svg></div>
    </div>
    <div class="st-zoom">100%</div>
    <svg width="16" height="16" viewBox="0 0 16 16"><circle cx="8" cy="8" r="7" fill="#f0f2f5" stroke="#8e9298"/><path d="M4 8h8" stroke="#444" stroke-width="2"/></svg>
    <div class="st-slider"><svg class="st-thumb" width="10" height="13" viewBox="0 0 10 13"><path d="M.5.5h9v8L5 12.500.5 8.500z" fill="#f3f4f6" stroke="#858a91"/></svg></div>
    <div class="st-end"><svg width="16" height="16" viewBox="0 0 16 16"><circle cx="8" cy="8" r="7" fill="#f0f2f5" stroke="#8e9298"/><path d="M4 8h8M8 4v8" stroke="#444" stroke-width="2"/></svg></div>
  </div>

  <!-- windows taskbar -->
  <div class="taskbar d-flex align-items-start">
    <div class="start-btn d-flex align-items-center">
      <svg width="16" height="15" viewBox="0 0 16 15"><path d="M1 2c2-1 4-1 6 0v5c-2-1-4-1-6 0z" fill="#e2592b"/><path d="M8 2c2 1 4 1 6 0v5c-2 1-4 1-6 0z" fill="#6cae3f"/><path d="M1 8c2-1 4-1 6 0v5c-2-1-4-1-6 0z" fill="#3b78c9"/><path d="M8 8c2 1 4 1 6 0v5c-2 1-4 1-6 0z" fill="#eebb2c"/></svg>
      <span>Start</span>
    </div>
    <div class="task-icons d-flex align-items-center">
      <div class="task-ic d-flex align-items-center"><svg width="18" height="18" viewBox="0 0 18 18"><circle cx="9" cy="9" r="6" fill="none" stroke="#3f93dc" stroke-width="3"/><path d="M4 9h11" stroke="#3f93dc" stroke-width="2"/><path d="M14 13l-3 2" stroke="#fff" stroke-width="3"/><path d="M1 14c3-6 10-12 15-12" fill="none" stroke="#e6b12e" stroke-width="1.500"/></svg></div>
      <div class="task-ic d-flex align-items-center"><svg width="16" height="16" viewBox="0 0 16 16"><path d="M1 3h5l1 2h8v10H1z" fill="#f2d67e" stroke="#c5a34b" stroke-width=".6"/><rect x="2" y="8" width="12" height="7" fill="#9fd0e8"/><rect x="6" y="10" width="4" height="5" fill="#e9eef2"/></svg></div>
      <div class="task-ic d-flex align-items-center"><svg width="17" height="17" viewBox="0 0 17 17"><rect x=".5" y=".5" width="16" height="16" fill="#cfe1f3" stroke="#5a87b8"/><circle cx="8.500" cy="8.500" r="6" fill="#ef8a1e"/><path d="M6.500 5l6 3.500-6 3.500z" fill="#fff"/></svg></div>
      <div class="task-ic d-flex align-items-center"><svg width="16" height="16" viewBox="0 0 16 16"><path d="M8 8L2 4a7 7 0 0 1 12.500 .5z" fill="#dd4b3e"/><path d="M8 8l6.500-3.500A7 7 0 0 1 8 15z" fill="#f4c20d"/><path d="M8 8v7A7 7 0 0 1 2 4z" fill="#3ba55d"/><circle cx="8" cy="8" r="3.500" fill="#4a86e8" stroke="#fff"/></svg></div>
      <div class="task-ic d-flex align-items-center"><svg width="16" height="17" viewBox="0 0 16 17"><ellipse cx="8" cy="8.500" rx="8" ry="8.500" fill="#c9101a"/><ellipse cx="8" cy="8.500" rx="2.800" ry="6.500" fill="#fff"/></svg></div>
    </div>
    <div class="task-on d-flex align-items-center"><svg width="16" height="16"><use href="#xl-logo"/></svg></div>
    <div class="flex-grow-1"></div>
    <div class="tray d-flex align-items-center">
      <div class="tray-ic tray-up d-flex"><svg width="7" height="10" viewBox="0 0 7 10"><path d="M.5 4l3-3 3 3M.5 8l3-3 3 3" fill="none" stroke="#222" stroke-width="1.300"/></svg></div>
      <div class="tray-ic d-flex"><svg width="16" height="15" viewBox="0 0 16 15"><path d="M1 5h3l4-4v13l-4-4H1z" fill="#e8e8e4" stroke="#777"/><path d="M10 4c2 2 2 5 0 7M12 2c3 3 3 8 0 11" fill="none" stroke="#999"/></svg></div>
      <div class="tray-ic d-flex"><svg width="16" height="16" viewBox="0 0 16 16"><rect x="4" y="3" width="11" height="9" fill="#dcdcd6" stroke="#555"/><rect x="1" y="1" width="4" height="11" fill="#f2f2ee" stroke="#555"/><path d="M3 14h11" stroke="#555" stroke-width="2"/></svg></div>
      <div class="tray-ic d-flex"><svg width="16" height="16" viewBox="0 0 16 16"><path d="M2 1v14" stroke="#666" stroke-width="1.500"/><path d="M3 2c3-1 5 1 10 0l-3 3 3 3c-5 1-7-1-10 0z" fill="#ecebe6" stroke="#777"/></svg></div>
      <div class="tray-time">6:05 AM</div>
      <svg class="ms-1" width="16" height="13" viewBox="0 0 16 13"><rect width="16" height="13" fill="#3a7fc6"/><path d="M0 8c5-2 10-2 16 0v5H0z" fill="#1f4f8f"/><path d="M2 9h8" stroke="#dbe9f7"/></svg>
    </div>
  </div>

  <!-- ANY.RUN watermark -->
  <svg class="wm" width="235" height="66" viewBox="0 0 235 66">
    <text x="2" y="46" textLength="60" lengthAdjust="spacingAndGlyphs">ANY</text>
    <path d="M82 2l43 28-43 33-7-6 33-27-24-15zM73 14h5v44h-5z" fill="rgba(255,255,255,.5)" stroke="rgba(190,190,190,.6)"/>
    <text x="134" y="46" textLength="60" lengthAdjust="spacingAndGlyphs">RUN</text>
  </svg>

  <script>
    const cols = ["w-a", "w-b", "w-c", "w-n", "w-n", "w-n", "w-n", "w-n", "w-n", "w-j"];
    const note = [
      "免责声明：",
      "此电子邮件及随之传送的任何文件均为",
      "机密信息，仅供其所针对的个人或实体",
      "使用。",
      "本电子邮件的内容（包括附件或附件的",
      "内容，如果有的话）是Menon and",
      "Menon",
      "Ltd的特权和机密材料，不得以任何方式",
      "披露，使用或复制除了预定的收件人",
      "之外的任何人。",
      "如果收到此电子邮件（包括机籍或附件",
      "）（如果有），请立即通知发件人并从",
      "系统中删除。"
    ].join("<br>");

    let html = "";
    for (let n = 55; n <= 72; n++) {
      html += `<div class="grid-row d-flex${n === 57 ? " grid-tall" : ""}"><div class="rh w-rh">${n}</div>`;
      cols.forEach((c, i) => {
        const text = n === 57 && i === 1 ? `<div class="cell-text">${note}</div>` : "";
        html += `<div class="gc ${c}">${text}</div>`;
      });
      html += "</div>";
    }
    document.getElementById("grid").innerHTML = html;
  </script>
  <script src="https://cdn.jsdelivr.net/npm/bootstrap@5.3.3/dist/js/bootstrap.bundle.min.js"></script>
</body>
</html>
